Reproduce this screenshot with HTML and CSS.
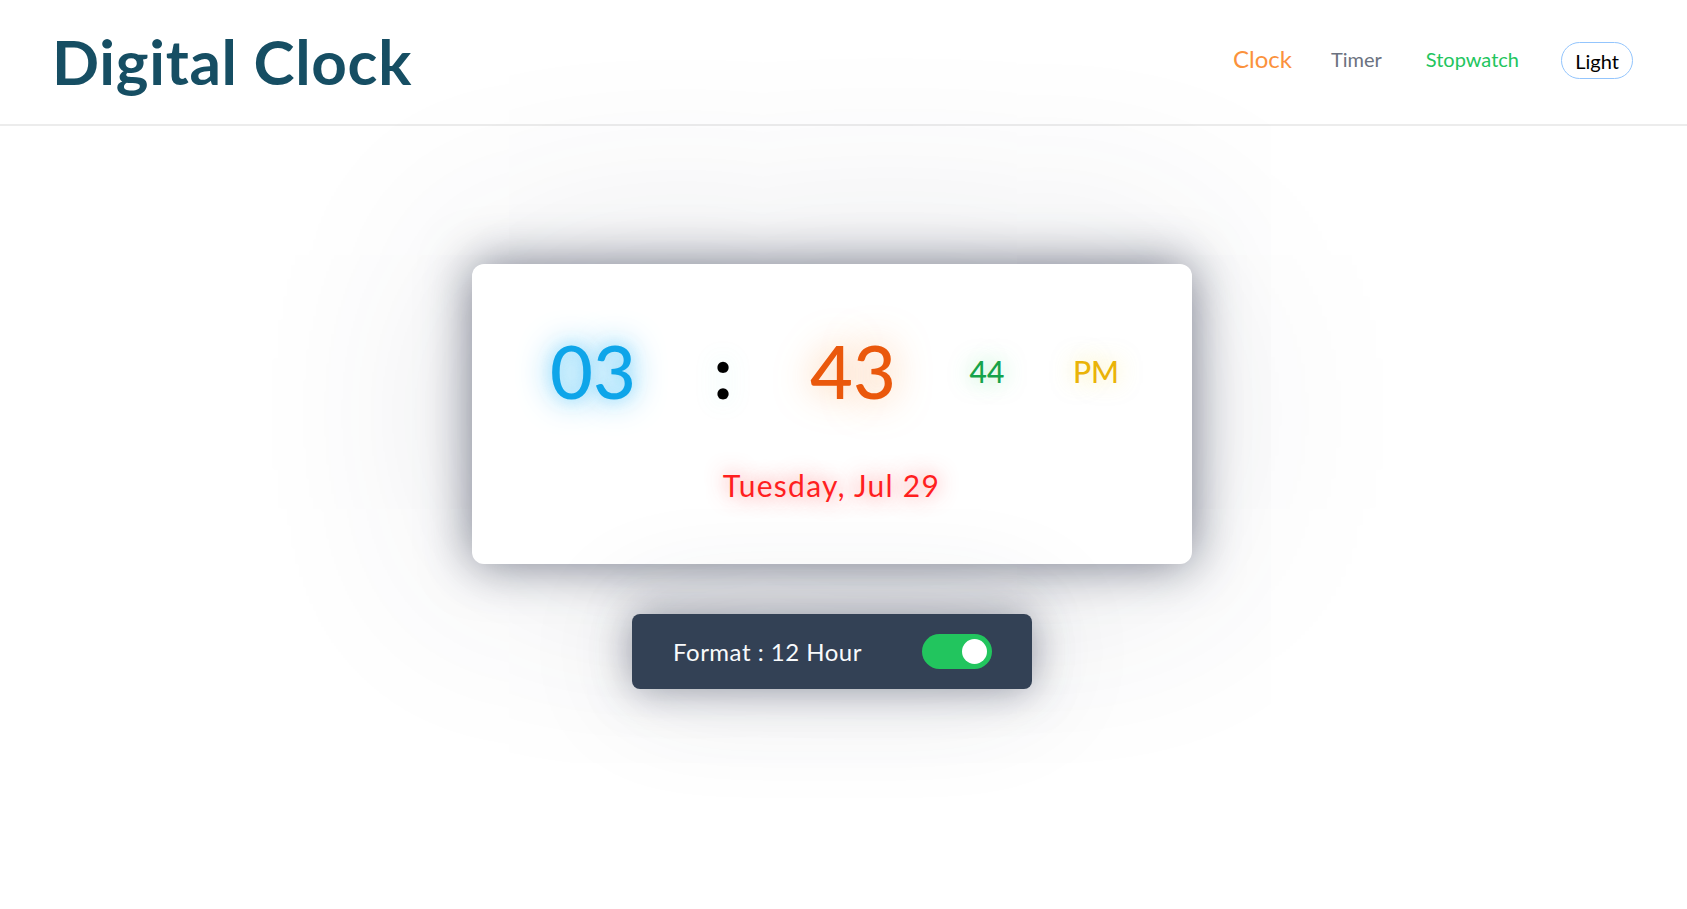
FILE: index.html
```html
<!DOCTYPE html>
<html lang="en">
<head>
<meta charset="utf-8">
<title>Digital Clock</title>
<link rel="stylesheet" href="styles.css">
</head>
<body>
<header class="topbar">
  <h1 class="brand">Digital Clock</h1>
  <nav class="nav">
    <a class="nav-link nav-clock" href="#">Clock</a>
    <a class="nav-link nav-timer" href="#">Timer</a>
    <a class="nav-link nav-stopwatch" href="#">Stopwatch</a>
    <button class="theme-btn" type="button">Light</button>
  </nav>
</header>
<main class="main">
  <section class="clock-card">
    <div class="time-row">
      <span class="t-hour">03</span>
      <span class="t-colon">:</span>
      <span class="t-min">43</span>
      <span class="t-sec">44</span>
      <span class="t-ampm">PM</span>
    </div>
    <div class="date">Tuesday, Jul 29</div>
  </section>
  <section class="format-bar">
    <span class="format-label">Format : 12 Hour</span>
    <span class="toggle"><span class="knob"></span></span>
  </section>
</main>
</body>
</html>
```
FILE: styles.css
```css
* { box-sizing: border-box; }
html, body { margin: 0; padding: 0; background: #ffffff; }
html { min-height: 100%; }
body { min-height: 100vh; font-family: Lato, "Open Sans", sans-serif; color: #000; }

.topbar {
  height: 126px;
  display: flex;
  align-items: center;
  justify-content: space-between;
  padding: 0 54px 0 52px;
  border-bottom: 2px solid #ececec;
}
.brand {
  margin: 0;
  font-size: 62px;
  font-weight: 700;
  letter-spacing: 0.7px;
  color: #164e63;
  line-height: 1;
  padding-bottom: 2px;
}
.nav { display: flex; align-items: center; margin-top: -7px; }
.nav-link { text-decoration: none; line-height: 1; }
.nav-clock { font-size: 24px; color: #fb923c; margin-right: 39px; }
.nav-timer { font-size: 20px; color: #6b7280; margin-right: 44px; }
.nav-stopwatch { font-size: 20px; color: #22c55e; margin-right: 42px; }
.theme-btn {
  font-family: Lato, sans-serif;
  font-size: 20px;
  color: #000;
  background: #fff;
  border: 1px solid #93c5fd;
  border-radius: 999px;
  width: 72px;
  height: 37px;
  padding: 0;
  margin-top: 4px;
}

.main {
  display: flex;
  flex-direction: column;
  align-items: center;
  padding: 138px 23px 0 0;
}
.clock-card {
  width: 720px;
  height: 300px;
  background: #fff;
  border-radius: 12px;
  box-shadow: 0 0 50px rgba(51, 58, 80, 0.66), 0 0 220px rgba(51, 58, 80, 0.16);
  padding: 67px 55px 0 56px;
}
.time-row {
  display: grid;
  grid-template-columns: 130px 130px 130px 138px 80px;
  align-items: center;
  text-align: center;
  height: 80px;
}
.t-hour, .t-min { font-size: 74px; line-height: 1; font-weight: 500; }
.t-hour { color: #0ea5e9; text-shadow: 0 0 32px rgba(56, 189, 248, 0.95), 0 0 14px rgba(125, 211, 252, 0.55); }
.t-colon { font-size: 74px; line-height: 1; font-weight: 700; color: #000; text-shadow: 0 0 24px rgba(94, 234, 212, 0.25); }
.t-min { color: #ea580c; text-shadow: 0 0 36px rgba(251, 146, 60, 0.6); }
.t-sec { font-size: 30px; font-weight: 500; color: #16a34a; text-shadow: 0 0 22px rgba(74, 222, 128, 0.55); }
.t-ampm { font-size: 30px; font-weight: 500; color: #eab308; text-shadow: 0 0 22px rgba(253, 224, 71, 0.5); }
.date {
  margin-top: 56px;
  text-align: center;
  font-size: 30px;
  letter-spacing: 1.3px;
  color: #ff1f1f;
  text-shadow: 0 0 20px rgba(255, 60, 60, 0.7);
  padding-right: 2px;
}

.format-bar {
  margin-top: 50px;
  width: 400px;
  height: 75px;
  background: #334155;
  border-radius: 8px;
  box-shadow: 0 0 40px rgba(51, 58, 80, 0.5), 0 0 120px rgba(51, 58, 80, 0.14);
  display: flex;
  align-items: center;
  justify-content: space-between;
  padding: 0 40px 0 41px;
}
.format-label { font-size: 24px; letter-spacing: 0.5px; color: #f8fafc; }
.toggle {
  width: 70px;
  height: 35px;
  border-radius: 999px;
  background: #22c55e;
  display: flex;
  align-items: center;
  justify-content: flex-end;
  padding-right: 5px;
}
.knob { width: 25px; height: 25px; border-radius: 50%; background: #fff; }
```
